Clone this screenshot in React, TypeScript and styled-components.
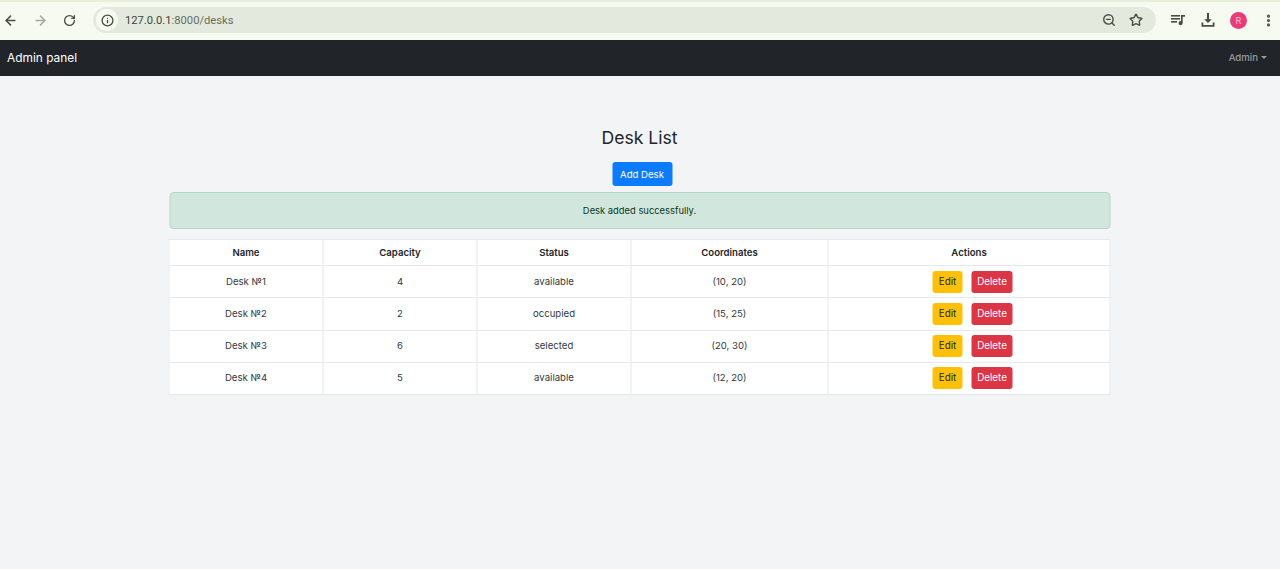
import React from 'react';
import styled, { createGlobalStyle } from 'styled-components';
import { ArrowLeft, ArrowRight, RotateCw, Info, ZoomOut, Star, EllipsisVertical } from 'lucide-react';

const GlobalStyle = createGlobalStyle`
  html, body {
    margin: 0;
    padding: 0;
    height: 100%;
    background: #f3f4f6;
    font-family: Inter, "Noto Sans", sans-serif;
    color: #212529;
  }
  * { box-sizing: border-box; }
`;

const Chrome = styled.div`
  height: 40px;
  background: #f6faf0;
  border-top: 2px solid #e6efdc;
  display: flex;
  align-items: center;
  padding: 0 0 2px 0;
  color: #474d45;
`;

const NavIcons = styled.div`
  width: 93px;
  display: flex;
  align-items: center;
  padding-left: 3px;
  gap: 15px;
  flex-shrink: 0;
`;

const NavIcon = styled.span<{ $muted?: boolean }>`
  display: flex;
  color: ${p => (p.$muted ? '#a4a9a0' : '#474d45')};
`;

const Omnibox = styled.div`
  width: 1063px;
  height: 26px;
  background: #e3eadd;
  border-radius: 13px;
  display: flex;
  align-items: center;
  padding: 0 13px 0 3px;
`;

const InfoBadge = styled.span`
  width: 22px;
  height: 22px;
  border-radius: 50%;
  background: #f6faf0;
  display: flex;
  align-items: center;
  justify-content: center;
  margin-right: 7px;
`;

const Url = styled.span`
  color: #3e443c;
  flex: 1;
  font: 400 11.2px Roboto, sans-serif;
  padding-top: 1px;
`;

const UrlPath = styled.span`
  color: #666c63;
`;

const OmniActions = styled.div`
  display: flex;
  align-items: center;
  gap: 13px;
`;

const ToolIcons = styled.div`
  flex: 1;
  display: flex;
  align-items: center;
  padding-left: 14px;
  gap: 14px;
`;

const Avatar = styled.span`
  width: 17px;
  height: 17px;
  border-radius: 50%;
  background: #ec3a78;
  color: #f9c6d9;
  font-size: 9px;
  display: flex;
  align-items: center;
  justify-content: center;
`;

const Navbar = styled.nav`
  height: 36px;
  background: #212529;
  display: flex;
  align-items: center;
  justify-content: space-between;
  padding: 0 13px 1px 7px;
`;

const Brand = styled.span`
  color: #fff;
  font-size: 11.9px;
`;

const NavUser = styled.span`
  color: rgba(255, 255, 255, 0.55);
  font-size: 9.6px;
  font-weight: 500;
  display: flex;
  align-items: center;
  gap: 3px;
  &::after {
    content: '';
    border-top: 3px solid currentColor;
    border-left: 3px solid transparent;
    border-right: 3px solid transparent;
  }
`;

const Main = styled.main`
  width: 941px;
  margin: 0 auto;
  padding-top: 50px;
  transform: translateX(-0.5px);
  display: flex;
  flex-direction: column;
  align-items: center;
`;

const Title = styled.h1`
  margin: 0;
  font-size: 17.6px;
  line-height: 24px;
  font-weight: 400;
  color: #212529;
`;

const AddButton = styled.button`
  margin: 12px 0 6px 5px;
  width: 60px;
  height: 24px;
  padding: 0;
  border: none;
  border-radius: 3px;
  background: #0d7bfd;
  color: #fff;
  white-space: nowrap;
  font: 400 9.6px Inter, sans-serif;
`;

const Alert = styled.div`
  width: 100%;
  height: 37px;
  padding-bottom: 1px;
  background: #d1e7dd;
  border: 1px solid #b3d7c6;
  border-radius: 4px;
  color: #0a3622;
  font-size: 9.4px;
  display: flex;
  align-items: center;
  justify-content: center;
`;

const Table = styled.table`
  width: 100%;
  margin-top: 10px;
  table-layout: fixed;
  border-collapse: collapse;
  background: #fff;
  font-size: 9.6px;
  color: #33383d;
`;

const Col = styled.col<{ $w: number }>`
  width: ${p => p.$w}px;
`;

const Th = styled.th`
  height: 26px;
  padding: 0 0 1px;
  border: 1px solid #e6e8eb;
  font-weight: 600;
  text-align: center;
  color: #212529;
`;

const Td = styled.td`
  height: 32.25px;
  padding: 0 0 1px;
  border: 1px solid #e6e8eb;
  text-align: center;
`;

const Actions = styled.div`
  display: flex;
  justify-content: center;
  gap: 9px;
  padding-left: 7px;
  margin-top: 1px;
`;

const ActionButton = styled.button<{ $danger?: boolean }>`
  height: 22px;
  width: ${p => (p.$danger ? 41 : 30)}px;
  padding: 0 0 1px;
  border: none;
  border-radius: 3px;
  background: ${p => (p.$danger ? '#dc3545' : '#ffc107')};
  color: ${p => (p.$danger ? '#fff' : '#212529')};
  font: 400 9.8px Inter, sans-serif;
`;

const QueueIcon = () => (
  <svg width="16" height="16" viewBox="0 0 16 16" fill="currentColor">
    <rect x="1" y="3" width="9" height="1.6" />
    <rect x="1" y="6" width="9" height="1.6" />
    <rect x="1" y="9" width="6" height="1.6" />
    <path d="M11 3h4v1.8h-2.3V11a2.1 2.1 0 1 1-1.7-2z" />
  </svg>
);

const DownloadIcon = () => (
  <svg width="16" height="16" viewBox="0 0 16 16" fill="currentColor">
    <path d="M7 1h2v6.2h2.8L8 11 4.2 7.2H7z" />
    <path d="M1.5 10.5h1.8v2.4h9.4v-2.4h1.8v4.2h-13z" />
  </svg>
);

const desks = [
  { name: 'Desk №1', capacity: 4, status: 'available', coords: '(10, 20)' },
  { name: 'Desk №2', capacity: 2, status: 'occupied', coords: '(15, 25)' },
  { name: 'Desk №3', capacity: 6, status: 'selected', coords: '(20, 30)' },
  { name: 'Desk №4', capacity: 5, status: 'available', coords: '(12, 20)' },
];

const App = () => (
  <>
    <GlobalStyle />
    <Chrome>
      <NavIcons>
        <NavIcon><ArrowLeft size={15} strokeWidth={2.4} /></NavIcon>
        <NavIcon $muted><ArrowRight size={15} strokeWidth={2.4} /></NavIcon>
        <NavIcon><RotateCw size={13} strokeWidth={2.4} /></NavIcon>
      </NavIcons>
      <Omnibox>
        <InfoBadge><Info size={13} strokeWidth={2.4} /></InfoBadge>
        <Url>127.0.0.1<UrlPath>:8000/desks</UrlPath></Url>
        <OmniActions>
          <ZoomOut size={14} strokeWidth={2.4} />
          <Star size={14} strokeWidth={2.4} />
        </OmniActions>
      </Omnibox>
      <ToolIcons>
        <QueueIcon />
        <DownloadIcon />
        <Avatar>R</Avatar>
        <EllipsisVertical size={15} strokeWidth={3} />
      </ToolIcons>
    </Chrome>
    <Navbar>
      <Brand>Admin panel</Brand>
      <NavUser>Admin</NavUser>
    </Navbar>
    <Main>
      <Title>Desk List</Title>
      <AddButton>Add Desk</AddButton>
      <Alert>Desk added successfully.</Alert>
      <Table>
        <colgroup>
          <Col $w={154} />
          <Col $w={154} />
          <Col $w={154} />
          <Col $w={197} />
          <Col $w={282} />
        </colgroup>
        <thead>
          <tr>
            <Th>Name</Th>
            <Th>Capacity</Th>
            <Th>Status</Th>
            <Th>Coordinates</Th>
            <Th>Actions</Th>
          </tr>
        </thead>
        <tbody>
          {desks.map(d => (
            <tr key={d.name}>
              <Td>{d.name}</Td>
              <Td>{d.capacity}</Td>
              <Td>{d.status}</Td>
              <Td>{d.coords}</Td>
              <Td>
                <Actions>
                  <ActionButton>Edit</ActionButton>
                  <ActionButton $danger>Delete</ActionButton>
                </Actions>
              </Td>
            </tr>
          ))}
        </tbody>
      </Table>
    </Main>
  </>
);

export default App;
